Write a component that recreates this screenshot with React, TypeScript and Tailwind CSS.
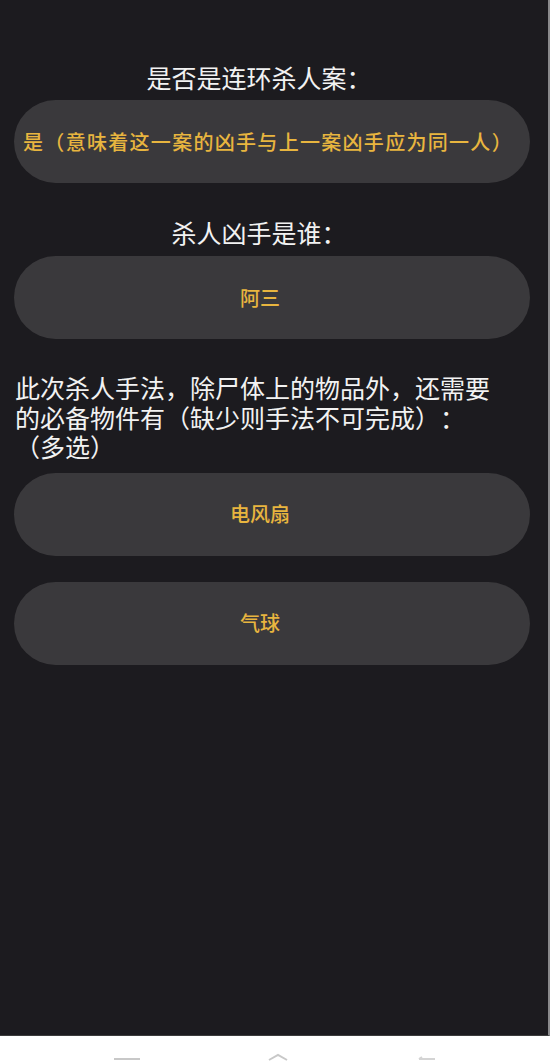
import React from "react"

const cjk = { fontFamily: '"Noto Sans CJK SC", "Noto Sans", sans-serif' }

type OptionProps = {
  label: string
  className?: string
}

function Option({ label, className = "" }: OptionProps) {
  return (
    <button
      className={
        "ml-[14px] flex h-[83px] w-[516px] items-center justify-center rounded-full bg-[#3a393c] font-medium text-[#e8b53f] " +
        className
      }
    >
      {label}
    </button>
  )
}

export default function App() {
  return (
    <div className="flex h-[1064px] w-[550px] flex-col bg-white [text-spacing-trim:space-all]" style={cjk}>
      {/* question sheet */}
      <main className="flex h-[1036px] flex-col border-r-2 border-b border-r-[#8a8a8c] border-b-[#3c3c3c] bg-[#1c1b1f] pt-[61px]">
        <h2 className="pr-[30px] text-center text-[25px] leading-[32px] text-[#f2f2f2]">是否是连环杀人案：</h2>
        <Option
          label="是（意味着这一案的凶手与上一案凶手应为同一人）"
          className="mt-[7px] pr-2 text-[20px] tracking-[1.3px]"
        />

        <h2 className="mt-[33px] pr-[30px] text-center text-[25px] leading-[32px] text-[#f2f2f2]">杀人凶手是谁：</h2>
        <Option label="阿三" className="mt-[8px] pr-6 text-[20px]" />

        <p className="mt-[34px] pl-[15px] text-[25px] leading-[29.5px] text-[#f2f2f2]">
          <span className="block">此次杀人手法，除尸体上的物品外，还需要</span>
          <span className="block">的必备物件有（缺少则手法不可完成）：</span>
          <span className="block">（多选）</span>
        </p>

        <Option label="电风扇" className="mt-[11px] pr-6 text-[20px]" />
        <Option label="气球" className="mt-[26px] pr-6 text-[20px]" />
      </main>

      {/* system navigation bar, cut off at the bottom edge */}
      <div className="flex flex-1 items-end justify-between px-[113px] pb-[3px]">
        <svg width="28" height="4" viewBox="0 0 28 4">
          <path d="M1 2h26" stroke="#c8c8c8" strokeWidth="2" />
        </svg>
        <svg width="22" height="8" viewBox="0 0 22 8">
          <path d="M2 7l9-5 9 5" stroke="#c8c8c8" strokeWidth="2" fill="none" />
        </svg>
        <svg width="22" height="6" viewBox="0 0 22 6">
          <path d="M4 4h16M4 4l3-2" stroke="#d4d4d4" strokeWidth="2" fill="none" />
        </svg>
      </div>
    </div>
  )
}
